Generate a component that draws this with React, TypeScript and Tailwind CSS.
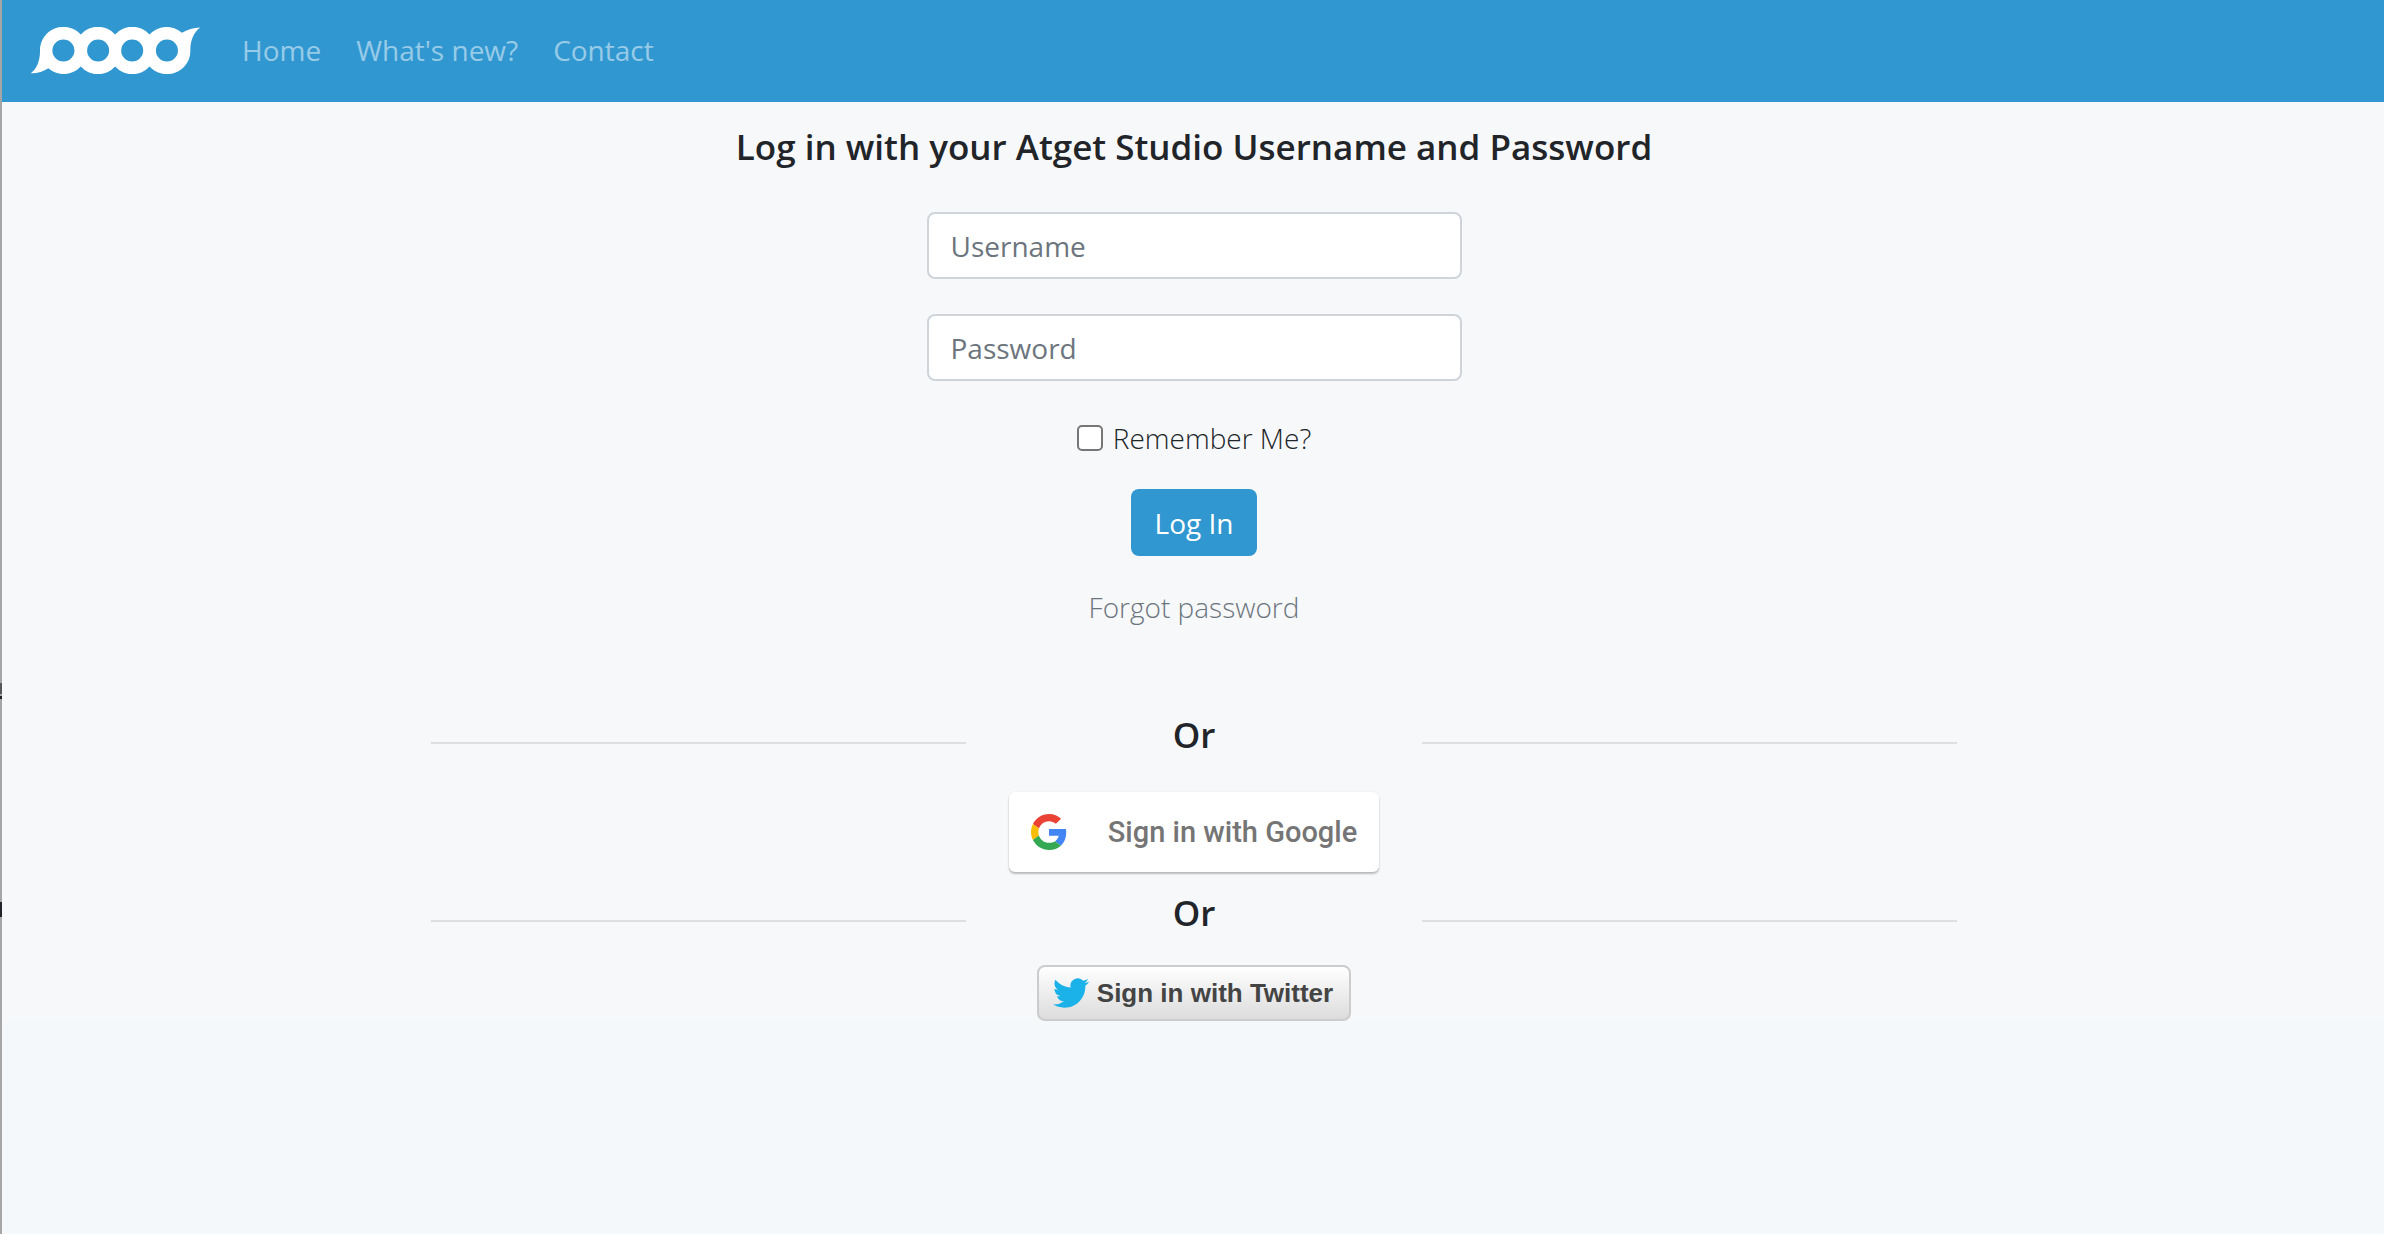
import { useState } from 'react'
import type { ReactNode } from 'react'

const NAV_LINKS = ['Home', "What's new?", 'Contact']

const INPUT_CLASS =
  'h-[67px] w-full rounded-lg border-2 border-[#ced4da] bg-white px-[22px] text-[28px] font-normal text-[#495057] placeholder:text-[#6c757d] focus:border-[#3097d1] focus:outline-none'

export default function App() {
  return (
    <div className="relative min-h-screen border-l-2 border-[#a6a6a6] bg-[#f5f8fa] font-['Open_Sans','Noto_Sans',sans-serif] text-[28px] leading-[42px] font-light text-[#212529]">
      <EdgeMarks />
      <Navbar />
      <main className="bg-[#f7f8fa] pt-[23px] pl-0.5">
        <LoginForm />
        <div className="mx-auto mt-[85px] w-2/3">
          <OrDivider />
          <div className="mt-[35px] flex justify-center">
            <GoogleButton />
          </div>
          <div className="mt-[19px]">
            <OrDivider />
          </div>
          <div className="mt-[30px] flex justify-center">
            <TwitterButton />
          </div>
        </div>
      </main>
    </div>
  )
}

// dark slivers over the left border
function EdgeMarks() {
  return (
    <div aria-hidden="true">
      <span className="absolute top-[683px] -left-0.5 h-[11px] w-0.5 bg-[#212529]/60" />
      <span className="absolute top-[696px] -left-0.5 h-[3px] w-0.5 bg-[#212529]" />
      <span className="absolute top-[902px] -left-0.5 h-[15px] w-0.5 bg-[#212529]" />
    </div>
  )
}

function Navbar() {
  return (
    <nav className="flex h-[102px] items-center bg-[#3097d1] pb-0.5 pl-7">
      <a href="#" aria-label="Atget Studio">
        <Logo />
      </a>
      <ul className="ml-[25px] flex gap-[3px]">
        {NAV_LINKS.map((label) => (
          <li key={label}>
            <a href="#" className="block px-4 font-normal text-white/50 hover:text-white/75">
              {label}
            </a>
          </li>
        ))}
      </ul>
    </nav>
  )
}

function LoginForm() {
  const [username, setUsername] = useState('')
  const [password, setPassword] = useState('')
  const [remember, setRemember] = useState(false)

  return (
    <form onSubmit={(e) => e.preventDefault()} className="flex flex-col items-center">
      <h1 className="text-[35px] leading-[44px] font-semibold">
        Log in with your Atget Studio Username and Password
      </h1>
      <div className="mt-[43px] flex w-1/4 flex-col gap-[35px] px-[30px]">
        <input
          type="text"
          aria-label="Username"
          placeholder="Username"
          value={username}
          onChange={(e) => setUsername(e.target.value)}
          className={INPUT_CLASS}
        />
        <input
          type="password"
          aria-label="Password"
          placeholder="Password"
          value={password}
          onChange={(e) => setPassword(e.target.value)}
          className={INPUT_CLASS}
        />
      </div>
      <label className="mt-9 flex items-center gap-[10px]">
        <input
          type="checkbox"
          checked={remember}
          onChange={(e) => setRemember(e.target.checked)}
          className="size-[26px] appearance-none rounded-[5px] border-2 border-[#767676] bg-white checked:bg-[#3097d1]"
        />
        Remember Me?
      </label>
      <button
        type="submit"
        className="mt-[30px] h-[67px] rounded-lg bg-[#3097d1] px-6 font-normal text-white hover:bg-[#2a83b6]"
      >
        Log In
      </button>
      <a href="#" className="mt-[30px] text-[#6c757d] hover:underline">
        Forgot password
      </a>
    </form>
  )
}

function OrDivider() {
  return (
    <div className="grid grid-cols-8 items-center">
      <Rule />
      <h2 className="col-span-2 text-center text-[35px] leading-[44px] font-semibold">Or</h2>
      <Rule />
    </div>
  )
}

function Rule() {
  return (
    <div className="col-span-3 px-[30px] pt-4">
      <hr className="border-t-2 border-[#dddfe2]" />
    </div>
  )
}

function GoogleButton() {
  return (
    <SocialButton className="h-20 gap-[41px] rounded-md bg-white px-[22px] font-[Roboto,sans-serif] text-[29px] font-medium text-[#757575] shadow-[0_2px_2px_rgba(0,0,0,0.24),0_0_2px_rgba(0,0,0,0.08)]">
      <GoogleLogo />
      Sign in with Google
    </SocialButton>
  )
}

function TwitterButton() {
  return (
    <SocialButton className="h-14 gap-2 rounded-lg border-2 border-[#ccc] bg-linear-to-b from-white to-[#dcdcdc] pr-4 pl-[14px] font-['Liberation_Sans',Arial,sans-serif] text-[26px] font-bold text-[#444]">
      <TwitterLogo />
      Sign in with Twitter
    </SocialButton>
  )
}

function SocialButton({ className, children }: { className: string; children: ReactNode }) {
  return (
    <button type="button" className={`flex items-center ${className}`}>
      {children}
    </button>
  )
}

function Logo() {
  return (
    <svg viewBox="90 80 512 140" className="h-[47px] w-[171px]" aria-hidden="true">
      <path
        fill="#fff"
        fillRule="evenodd"
        d="M92 218C110 206 120 182 120 150A70 69 0 0 1 242 102A69 69 0 0 1 345 102A69 69 0 0 1 448 102A69 69 0 0 1 545 97C560 87 580 82 600 81C581 94 570 118 570 150A70 69 0 0 1 448 198A69 69 0 0 1 345 198A69 69 0 0 1 242 198A69 69 0 0 1 145 203C130 213 110 219 92 218Z
        M157 150a33 33 0 1 0 66 0a33 33 0 1 0-66 0Z
        M261 150a33 33 0 1 0 66 0a33 33 0 1 0-66 0Z
        M363 150a33 33 0 1 0 66 0a33 33 0 1 0-66 0Z
        M467 150a33 33 0 1 0 66 0a33 33 0 1 0-66 0Z"
      />
    </svg>
  )
}

function GoogleLogo() {
  return (
    <svg viewBox="0 0 48 48" className="size-9" aria-hidden="true">
      <path fill="#EA4335" d="M24 9.5c3.54 0 6.71 1.22 9.21 3.6l6.85-6.85C35.9 2.38 30.47 0 24 0 14.62 0 6.51 5.38 2.56 13.22l7.98 6.19C12.43 13.72 17.74 9.5 24 9.5z" />
      <path fill="#4285F4" d="M46.98 24.55c0-1.57-.15-3.09-.38-4.55H24v9.02h12.94c-.58 2.96-2.26 5.48-4.78 7.18l7.73 6c4.51-4.18 7.09-10.36 7.09-17.65z" />
      <path fill="#FBBC05" d="M10.53 28.59c-.48-1.45-.76-2.99-.76-4.59s.27-3.14.76-4.59l-7.98-6.19C.92 16.46 0 20.12 0 24c0 3.88.92 7.54 2.56 10.78l7.97-6.19z" />
      <path fill="#34A853" d="M24 48c6.48 0 11.93-2.13 15.89-5.81l-7.73-6c-2.15 1.45-4.92 2.3-8.16 2.3-6.26 0-11.57-4.22-13.47-9.91l-7.98 6.19C6.51 42.62 14.62 48 24 48z" />
    </svg>
  )
}

function TwitterLogo() {
  return (
    <svg viewBox="0 2 24 20" className="h-[30px] w-9" aria-hidden="true">
      <path
        fill="#1ab2e8"
        d="M23.953 4.57a10 10 0 01-2.825.775 4.958 4.958 0 002.163-2.723c-.951.555-2.005.959-3.127 1.184a4.92 4.92 0 00-8.384 4.482C7.69 8.095 4.067 6.13 1.64 3.162a4.822 4.822 0 00-.666 2.475c0 1.71.87 3.213 2.188 4.096a4.904 4.904 0 01-2.228-.616v.06a4.923 4.923 0 003.946 4.827 4.996 4.996 0 01-2.212.085 4.936 4.936 0 004.604 3.417 9.867 9.867 0 01-6.102 2.105c-.39 0-.779-.023-1.17-.067a13.995 13.995 0 007.557 2.209c9.053 0 13.998-7.496 13.998-13.985 0-.21 0-.42-.015-.63A9.935 9.935 0 0024 4.59z"
      />
    </svg>
  )
}
